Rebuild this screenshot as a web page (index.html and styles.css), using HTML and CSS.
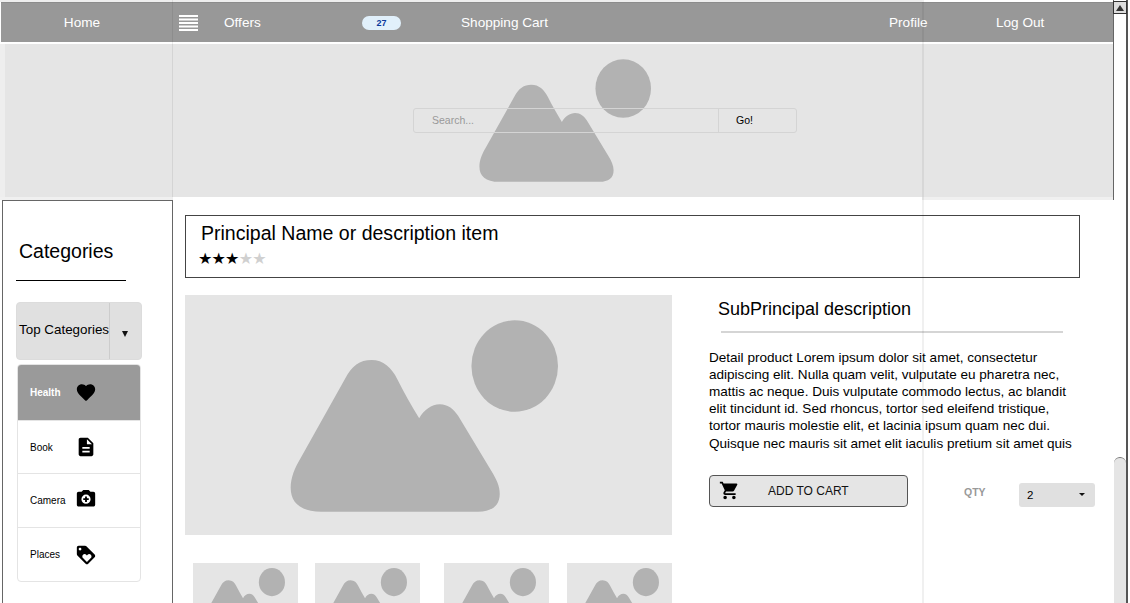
FILE: index.html
```html
<!DOCTYPE html>
<html lang="en">
<head>
<meta charset="utf-8">
<title>Product detail</title>
<link rel="stylesheet" href="styles.css">
</head>
<body>
<svg class="defs" width="0" height="0" aria-hidden="true">
  <symbol id="ph" viewBox="30 28 805 575" preserveAspectRatio="none">
    <path d="M125 602C60 602 32 575 32 530C32 500 45 470 60 445L195 205C215 165 240 148 275 148C310 148 335 170 352 205C372 245 395 285 418 322C432 297 455 280 480 280C505 280 522 295 535 315L635 480C650 505 660 525 660 548C660 585 635 602 595 602Z"/>
    <ellipse cx="705" cy="166" rx="130" ry="137"/>
  </symbol>
</svg>
<div class="window">
  <div class="page">
    <div class="top">
      <div class="top-strip"></div>
      <nav class="nav">
        <a class="nav-home">Home</a>
        <svg class="burger" width="19" height="16" viewBox="0 0 19 16"><rect y="0" width="19" height="2"/><rect y="3.5" width="19" height="2"/><rect y="7" width="19" height="2"/><rect y="10.5" width="19" height="2"/><rect y="14" width="19" height="2"/></svg>
        <a>Offers</a>
        <span class="badge">27</span>
        <a>Shopping Cart</a>
        <a>Profile</a>
        <a>Log Out</a>
      </nav>
      <header class="hero">
        <svg class="hero-ph ph"><use href="#ph"/></svg>
        <form class="search">
          <span class="search-input">Search...</span>
          <span class="search-go">Go!</span>
        </form>
      </header>
    </div>
    <div class="body">
      <aside class="side">
        <h2 class="side-title">Categories</h2>
        <div class="side-rule"></div>
        <div class="dropdown"><span class="dropdown-label">Top Categories</span><span class="dropdown-caret"></span></div>
        <ul class="cats">
          <li class="cat cat-active"><span>Health</span><svg viewBox="0 0.5 24 24"><path d="M12 21.35l-1.45-1.32C5.4 15.36 2 12.28 2 8.5 2 5.42 4.42 3 7.5 3c1.74 0 3.41.81 4.5 2.09C13.09 3.81 14.76 3 16.5 3 19.58 3 22 5.42 22 8.5c0 3.78-3.4 6.86-8.55 11.54L12 21.35z"/></svg></li>
          <li class="cat cat-book"><span>Book</span><svg viewBox="0 0 24 24"><path d="M14 2H6c-1.1 0-1.99.9-1.99 2L4 20c0 1.1.89 2 1.99 2H18c1.1 0 2-.9 2-2V8l-6-6zm2 16H8v-2h8v2zm0-4H8v-2h8v2zm-3-5V3.5L18.5 9H13z"/></svg></li>
          <li class="cat"><span>Camera</span><svg viewBox="0 2 24 24"><path fill-rule="evenodd" d="M20 4h-3.17L15 2H9L7.17 4H4c-1.1 0-2 .9-2 2v12c0 1.1.9 2 2 2h16c1.1 0 2-.9 2-2V6c0-1.1-.9-2-2-2zM12 7a5 5 0 1 1 0 10a5 5 0 0 1 0-10z"/><path d="M11 9h2v2h2v2h-2v2h-2v-2H9v-2h2z"/></svg></li>
          <li class="cat"><span>Places</span><svg viewBox="0 0 24 24"><path d="M21.41 11.58l-9-9C12.05 2.22 11.55 2 11 2H4c-1.1 0-2 .9-2 2v7c0 .55.22 1.05.59 1.42l9 9c.36.36.86.58 1.41.58s1.05-.22 1.41-.59l7-7c.37-.36.59-.86.59-1.41s-.23-1.06-.59-1.42zM5.5 7C4.67 7 4 6.33 4 5.5S4.67 4 5.5 4 7 4.67 7 5.5 6.33 7 5.5 7zm11.77 8.27L13 19.54l-4.27-4.27C8.28 14.81 8 14.19 8 13.5c0-1.38 1.12-2.5 2.5-2.5.69 0 1.32.28 1.77.74l.73.72.73-.73c.45-.45 1.08-.73 1.77-.73 1.38 0 2.5 1.12 2.5 2.5 0 .69-.28 1.32-.73 1.77z"/></svg></li>
        </ul>
      </aside>
      <main class="main">
        <section class="title-box">
          <h1 class="title">Principal Name or description item</h1>
          <div class="stars"><span class="on">★★★</span><span class="off">★★</span></div>
        </section>
        <section class="product">
          <div class="gallery">
            <div class="image"><svg class="image-ph ph"><use href="#ph"/></svg></div>
            <div class="thumbs">
              <div class="thumb"><svg class="thumb-ph ph"><use href="#ph"/></svg></div>
              <div class="thumb"><svg class="thumb-ph ph"><use href="#ph"/></svg></div>
              <div class="thumb"><svg class="thumb-ph ph"><use href="#ph"/></svg></div>
              <div class="thumb"><svg class="thumb-ph ph"><use href="#ph"/></svg></div>
            </div>
          </div>
          <div class="info">
            <h2 class="sub">SubPrincipal description</h2>
            <div class="sub-rule"></div>
            <p class="desc">Detail product Lorem ipsum dolor sit amet, consectetur adipiscing elit. Nulla quam velit, vulputate eu pharetra nec, mattis ac neque. Duis vulputate commodo lectus, ac blandit elit tincidunt id. Sed rhoncus, tortor sed eleifend tristique, tortor mauris molestie elit, et lacinia ipsum quam nec dui. Quisque nec mauris sit amet elit iaculis pretium sit amet quis</p>
            <div class="buy">
              <button class="add" type="button">
                <svg viewBox="0 0 24 24"><path d="M7 18c-1.1 0-1.99.9-1.99 2S5.9 22 7 22s2-.9 2-2-.9-2-2-2zM1 2v2h2l3.6 7.59-1.35 2.45c-.16.28-.25.61-.25.96 0 1.1.9 2 2 2h12v-2H7.42c-.14 0-.25-.11-.25-.25l.03-.12.9-1.63h7.45c.75 0 1.41-.41 1.75-1.03l3.58-6.47c.08-.14.12-.31.12-.48 0-.55-.45-1-1-1H5.21l-.94-2H1zm16 16c-1.1 0-1.99.9-1.99 2s.89 2 1.99 2 2-.9 2-2-.9-2-2-2z"/></svg>
                <span>ADD TO CART</span>
              </button>
              <span class="qty-label">QTY</span>
              <div class="qty"><span>2</span><i class="qty-caret"></i></div>
            </div>
          </div>
        </section>
      </main>
    </div>
  </div>
  <div class="scrollbar">
    <div class="scroll-up"><i></i></div>
    <div class="scroll-thumb"></div>
  </div>
  <div class="band band-left"></div>
  <div class="band band-right"></div>
  <div class="strip-left"></div>
  <div class="guide guide-left"></div>
  <div class="guide guide-right"></div>
</div>
</body>
</html>
```

FILE: styles.css
```css
* { box-sizing: border-box; }
html, body { margin: 0; height: 100%; overflow: hidden; background: #fff; }
body { font-family: "Liberation Sans", Arial, sans-serif; color: #000; }
.defs { position: absolute; }
h1, h2, p, ul { margin: 0; padding: 0; font-weight: 400; }
ul { list-style: none; }

.window { position: relative; display: flex; width: 1130px; height: 603px; overflow: hidden; }
.page { width: 1113px; flex: none; }

.top { width: 1114px; height: 200px; border-right: 1px solid #666; background: #fff; }
.top-strip { width: 922px; height: 2px; background: #eee; }
.nav {
  display: grid;
  grid-template-columns: 178px 45px 138px 99px 428px 107px 1fr;
  align-items: center;
  margin-left: 1px;
  height: 40px;
  border-top: 1px solid #8c8c8c;
  background: #989898;
  color: #fff;
  font-size: 13.6px;
}
.nav-home { padding-right: 16px; text-align: center; }
.burger { fill: #fff; }
.badge {
  width: 39px;
  height: 14px;
  border-radius: 7px;
  background: #e1f0fb;
  color: #0b3a9b;
  font-size: 9px;
  font-weight: 700;
  line-height: 14px;
  text-align: center;
}
.hero {
  display: grid;
  margin: 2px 0 0 5px;
  height: 153px;
  background: #e5e5e5;
}
.hero-ph { grid-area: 1 / 1; margin: 15px 0 0 474px; width: 172px; height: 123px; }
.ph { fill: #b2b2b2; display: block; }
.search {
  grid-area: 1 / 1;
  display: flex;
  margin: 64px 0 0 408px;
  width: 384px;
  height: 25px;
  border: 1px solid #d4d4d4;
  border-radius: 3px;
  font-size: 10.5px;
  line-height: 23px;
}
.search-input { width: 304px; padding-left: 18px; color: #999; }
.search-go { flex: 1; border-left: 1px solid #d4d4d4; padding-left: 17px; }

.body { display: flex; align-items: flex-start; }
.side {
  flex: none;
  margin-left: 2px;
  width: 171px;
  height: 430px;
  border: 1px solid #666;
  padding: 38px 0 0 13px;
}
.side-title { padding-left: 3px; font-size: 19.5px; line-height: 24px; }
.side-rule { margin-top: 17px; width: 110px; height: 1px; background: #000; }
.dropdown {
  display: flex;
  align-items: center;
  margin-top: 21px;
  width: 126px;
  height: 58px;
  border: 1px solid #dcdcdc;
  border-radius: 4px;
  background: #e0e0e0;
  font-size: 13.4px;
}
.dropdown-label { width: 93px; height: 100%; padding-left: 2px; line-height: 54px; border-right: 1px solid #ccc; white-space: nowrap; }
.dropdown-caret {
  margin-left: 12px;
  margin-top: 5px;
  border-left: 3.5px solid transparent;
  border-right: 3.5px solid transparent;
  border-top: 6px solid #111;
}
.cats {
  margin: 4px 0 0 1px;
  width: 124px;
  border: 1px solid #e4e4e4;
  border-radius: 4px;
  overflow: hidden;
}
.cat {
  display: grid;
  grid-template-columns: 45px 22px;
  align-items: center;
  padding-left: 12px;
  height: 54px;
  border-top: 1px solid #e4e4e4;
  font-size: 10px;
}
.cat svg { display: block; width: 22px; height: 22px; }
.cat-active { border-top: 0; height: 55px; background: #9a9a9a; color: #fff; font-weight: 700; }
.cat-book { height: 53px; }

.main { flex: none; margin-left: 12px; width: 925px; }
.title-box { margin-top: 15px; width: 895px; height: 63px; border: 1px solid #444; padding: 5px 0 0 13px; }
.title { padding-left: 2px; font-size: 19.55px; line-height: 24px; }
.stars { margin: 5px 0 0 -1px; font-family: "DejaVu Sans", sans-serif; font-size: 16px; line-height: 18px; letter-spacing: -.8px; }
.stars .off { color: #d0d0d0; }

.product { display: flex; margin-top: 17px; }
.gallery { flex: none; width: 487px; }
.image { width: 487px; height: 240px; background: #e5e5e5; padding: 25px 0 0 105px; }
.image-ph { width: 268px; height: 192px; }
.thumbs {
  display: grid;
  grid-template-columns: 122px 129px 123px 105px;
  margin: 28px 0 0 8px;
}
.thumb { width: 105px; height: 70px; background: #e5e5e5; padding: 5px 0 0 11px; }
.thumb-ph { width: 81px; height: 59px; }

.info { flex: none; margin-left: 37px; width: 395px; }
.sub { padding-left: 9px; font-size: 18px; line-height: 28px; }
.sub-rule { margin: 8px 0 0 12px; width: 342px; height: 1.5px; background: #d5d5d5; }
.desc { margin-top: 16px; width: 365px; font-size: 13.55px; line-height: 17.2px; }
.buy { display: flex; align-items: flex-start; margin-top: 23px; }
.add {
  display: flex;
  flex: none;
  align-items: center;
  margin: 0;
  padding: 0 0 0 9px;
  width: 199px;
  height: 32px;
  border: 1px solid #555;
  border-bottom-width: 1.5px;
  border-radius: 4px;
  background: #e5e5e5;
  color: #111;
  font: 12px "Liberation Sans", Arial, sans-serif;
}
.add svg { width: 21px; height: 21px; flex: none; }
.add span { margin-left: 28px; }
.qty-label { flex: none; margin: 11px 0 0 56px; width: 55px; color: #999; font-size: 10.5px; font-weight: 700; line-height: 12px; }
.qty {
  display: flex;
  flex: none;
  align-items: center;
  justify-content: space-between;
  margin-top: 8px;
  padding: 0 10px 0 8px;
  width: 76px;
  height: 24px;
  border-radius: 3px;
  background: #e0e0e0;
  font-size: 11.5px;
}
.qty-caret { border-left: 3px solid transparent; border-right: 3px solid transparent; border-top: 3px solid #111; }

.scrollbar {
  display: flex;
  flex-direction: column;
  flex: none;
  width: 15px;
  height: 603px;
  padding-left: 1px;
  border-right: 2px solid #555;
}
.scroll-up {
  display: flex;
  align-items: center;
  justify-content: center;
  margin: 1px 0 0 -1px;
  width: 14px;
  height: 13px;
  border: 1px solid #333;
  background: #ddd;
}
.scroll-up i { border-left: 4px solid transparent; border-right: 4px solid transparent; border-bottom: 6px solid #333; }
.scroll-thumb {
  margin-top: auto;
  width: 12px;
  height: 146px;
  border-top: 1px solid #777;
  border-radius: 6px 6px 0 0;
  background: #e5e5e5;
}

.band { position: absolute; top: 197px; height: 3px; background: #f0f0f0; pointer-events: none; }
.band-left { left: 0; width: 172px; }
.band-right { left: 922px; width: 191px; }
.strip-left { position: absolute; left: 0; top: 44px; width: 5px; height: 153px; background: #eee; }
.guide { position: absolute; top: 0; pointer-events: none; }
.guide-left { left: 172px; width: 1px; height: 200px; background: rgba(0,0,0,.07); }
.guide-right { left: 922px; width: 2px; height: 603px; background: rgba(0,0,0,.06); }
```
